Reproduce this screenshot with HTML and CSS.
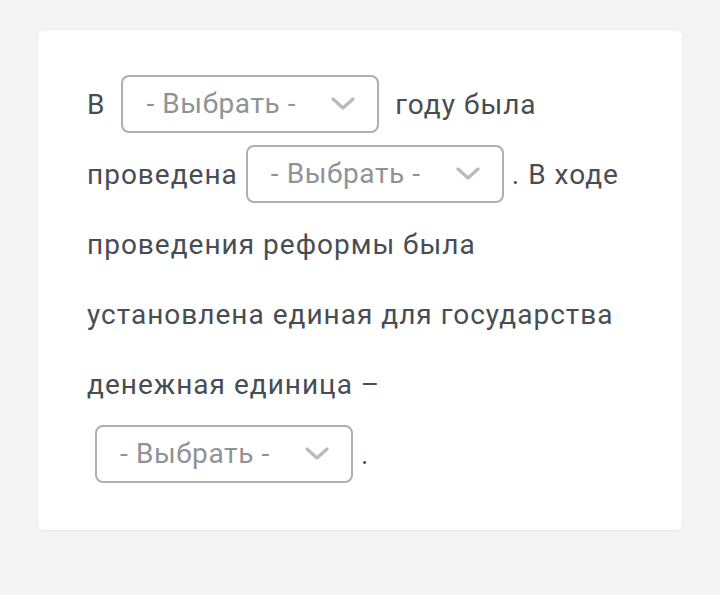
FILE: index.html
```html
<!DOCTYPE html>
<html lang="ru">
<head>
<meta charset="utf-8">
<link rel="stylesheet" href="styles.css">
</head>
<body>
<div class="card">
<p class="text">В <span class="select"><span class="ph">- Выбрать -</span><svg class="chev" viewBox="0 0 24 14" width="24" height="14"><path d="M2 2 L12 11 L22 2" fill="none" stroke="#b8babc" stroke-width="3.2" stroke-linecap="round" stroke-linejoin="round"/></svg></span> году была проведена<span class="select"><span class="ph">- Выбрать -</span><svg class="chev" viewBox="0 0 24 14" width="24" height="14"><path d="M2 2 L12 11 L22 2" fill="none" stroke="#b8babc" stroke-width="3.2" stroke-linecap="round" stroke-linejoin="round"/></svg></span>. В ходе проведения реформы была установлена единая для государства денежная единица&nbsp;– <span class="select"><span class="ph">- Выбрать -</span><svg class="chev" viewBox="0 0 24 14" width="24" height="14"><path d="M2 2 L12 11 L22 2" fill="none" stroke="#b8babc" stroke-width="3.2" stroke-linecap="round" stroke-linejoin="round"/></svg></span>.</p>
</div>
</body>
</html>
```
FILE: styles.css
```css
html, body {
  margin: 0;
  padding: 0;
  background: #f4f4f4;
}
body {
  padding: 30px 38px;
  font-family: Roboto, "Noto Sans", sans-serif;
}
.card {
  width: 644px;
  box-sizing: border-box;
  height: 500px;
  background: #fff;
  border-radius: 6px;
  box-shadow: 0 0 0 1px #ececec, 0 1px 2px rgba(0,0,0,0.04);
  padding: 40px 47px 0 49px;
}
.text {
  margin: 0;
  font-size: 28px;
  letter-spacing: 1px;
  line-height: 70px;
  color: #484d53;
}
.select {
  display: inline-flex;
  align-items: center;
  justify-content: space-between;
  box-sizing: border-box;
  width: 258px;
  height: 58px;
  margin: 0 8px;
  padding: 0 22px 0 23px;
  border: 2px solid #adafb1;
  border-radius: 8px;
  vertical-align: 1px;
  line-height: 1;
  letter-spacing: 0.6px;
}
.ph {
  color: #8f9397;
}
.chev {
  display: block;
}
```
